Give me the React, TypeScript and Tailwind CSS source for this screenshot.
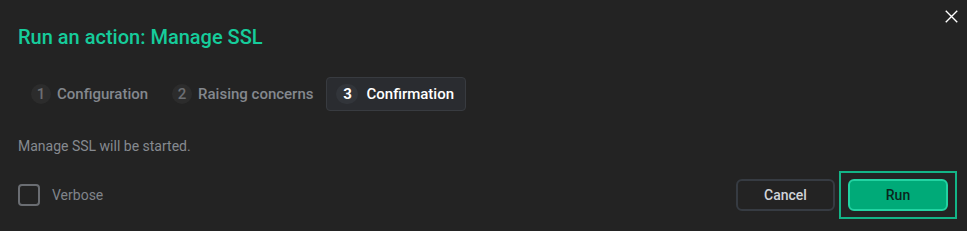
import React from "react";

function Step({ n, label, active }: { n: number; label: string; active?: boolean }) {
  return (
    <div
      className={
        active
          ? "flex items-center gap-[8px] h-[34px] pl-[9px] pr-[11px] rounded-[4px] border border-[#383b40] bg-[#2a2c30]"
          : "flex items-center gap-[6px] h-[34px] px-[10px] rounded-[4px] border border-transparent"
      }
    >
      <span
        className={
          active
            ? "flex items-center justify-center w-[22px] h-[20px] rounded-full bg-[#32353a] text-[15px] font-bold text-white"
            : "flex items-center justify-center w-[20px] h-[20px] rounded-full bg-[#2c2c2c] text-[15px] font-medium text-[#6c6e72]"
        }
      >
        {n}
      </span>
      <span
        className={
          active
            ? "text-[15px] font-medium text-white"
            : "text-[15px] font-medium text-[#84888e]"
        }
      >
        {label}
      </span>
    </div>
  );
}

export default function App() {
  return (
    <div
      className="relative w-[967px] h-[231px] bg-[#232323] overflow-hidden"
      style={{ fontFamily: "Roboto, 'Liberation Sans', sans-serif" }}
    >
      <button className="absolute top-[10px] right-[9px] w-[13px] h-[13px]">
        <svg width="13" height="13" viewBox="0 0 13 13" fill="none">
          <path d="M0.75 0.75L12.25 12.25M12.25 0.75L0.75 12.25" stroke="#ffffff" strokeWidth="1.4" />
        </svg>
      </button>
      <div className="flex flex-col pl-[18px] pt-[23px]">
        <h1 className="text-[20px] leading-[28px] font-medium text-[#16cc9b]">
          Run an action: Manage SSL
        </h1>
        <div className="flex items-center gap-[2px] mt-[26px] ml-[2px]">
          <Step n={1} label="Configuration" />
          <Step n={2} label="Raising concerns" />
          <Step n={3} label="Confirmation" active />
        </div>
        <p className="mt-[25px] text-[14px] leading-[20px] text-[#868a90]">
          Manage SSL will be started.
        </p>
        <div className="flex items-center justify-between mt-[15px] pr-[10px]">
          <label className="flex items-center gap-[12px]">
            <span className="w-[22px] h-[22px] rounded-[4px] border-2 border-[#6a6d72]" />
            <span className="text-[14px] text-[#80848a]">Verbose</span>
          </label>
          <div className="flex items-center gap-[4px]">
            <button className="w-[99px] h-[32px] rounded-[6px] border-2 border-[#363b42] text-[14px] font-medium text-[#d0d3d8]">
              Cancel
            </button>
            <div className="border-2 border-[#13b487] px-[7px] py-[6px]">
              <button className="w-[100px] h-[32px] rounded-[6px] border-2 border-[#22d3a2] bg-[#00aa78] text-[14px] font-medium text-[#0b261d]">
                Run
              </button>
            </div>
          </div>
        </div>
      </div>
    </div>
  );
}
